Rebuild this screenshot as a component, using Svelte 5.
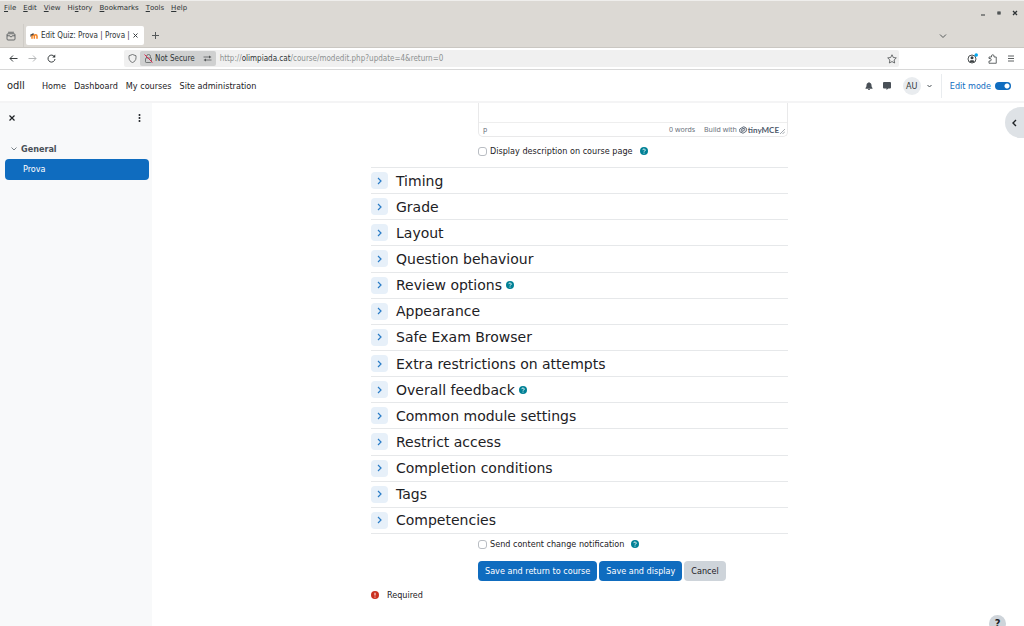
<script lang="ts">
	interface Section {
		title: string;
		help?: boolean;
	}

	const menus = ['File', 'Edit', 'View', 'History', 'Bookmarks', 'Tools', 'Help'];
	const underlined: Record<string, number> = { History: 2 };
	const links = ['Home', 'Dashboard', 'My courses', 'Site administration'];

	const sections: Section[] = [
		{ title: 'Timing' },
		{ title: 'Grade' },
		{ title: 'Layout' },
		{ title: 'Question behaviour' },
		{ title: 'Review options', help: true },
		{ title: 'Appearance' },
		{ title: 'Safe Exam Browser' },
		{ title: 'Extra restrictions on attempts' },
		{ title: 'Overall feedback', help: true },
		{ title: 'Common module settings' },
		{ title: 'Restrict access' },
		{ title: 'Completion conditions' },
		{ title: 'Tags' },
		{ title: 'Competencies' }
	];

	let showDescription = $state(false);
	let notify = $state(false);
	let editMode = $state(true);
</script>

{#snippet helpIcon(label: string)}
	<button class="help" aria-label={label}>
		<svg width="8" height="8" viewBox="0 0 16 16" aria-hidden="true">
			<circle cx="8" cy="8" r="8" fill="#008196" />
			<path d="M5.6 6.2a2.4 2.2 0 1 1 3.6 1.9C8.3 8.6 8 8.9 8 9.7" fill="none" stroke="#fff" stroke-width="1.8" />
			<circle cx="8" cy="12" r="1.1" fill="#fff" />
		</svg>
	</button>
{/snippet}

<div class="window">
	<header class="browser">
		<div class="menubar">
			<nav class="menus" aria-label="Application menu">
				{#each menus as menu}
					{@const at = underlined[menu] ?? 0}
					<button>{menu.slice(0, at)}<u>{menu[at]}</u>{menu.slice(at + 1)}</button>
				{/each}
			</nav>
			<div class="controls">
				<button aria-label="Minimize">
					<svg width="6" height="6" viewBox="0 0 6 6"><path d="M1 5h4" stroke="#2e3436" stroke-width="1" /></svg>
				</button>
				<button aria-label="Restore">
					<svg width="6" height="6" viewBox="0 0 6 6"><path d="M2 2h2v2H2z" fill="none" stroke="#2e3436" stroke-width="1.2" /></svg>
				</button>
				<button aria-label="Close window">
					<svg width="6" height="6" viewBox="0 0 6 6"><path d="M1 1l4 4M5 1L1 5" stroke="#2e3436" stroke-width="1.3" /></svg>
				</button>
			</div>
		</div>

		<div class="tabs">
			<button class="firefox-view" aria-label="Recent browsing">
				<svg width="10" height="10" viewBox="0 0 20 20" fill="none" stroke="#4a4f50" stroke-width="1.6">
					<path d="M5 2.500h10" stroke-linecap="round" />
					<path d="M4 5.500h12a2 2 0 0 1 2 2V16a2 2 0 0 1-2 2H4a2 2 0 0 1-2-2V7.500a2 2 0 0 1 2-2zM2 9.500h5.500c0 3 5 3 5 0H18" />
				</svg>
			</button>
			<div class="tab">
				<svg width="8" height="6" viewBox="0 0 24 18" fill="none">
					<path d="M6 17V9.500a3.500 3.500 0 0 1 7 0V17M13 9.500a3.500 3.500 0 0 1 8 0V17" stroke="#f58220" stroke-width="4.500" />
					<path d="M0 6l9-5 4 2-8 5z" fill="#444" />
					<path d="M2 5v7" stroke="#444" stroke-width="1.5" />
				</svg>
				<span class="tab-title">Edit Quiz: Prova | Prova |</span>
				<button aria-label="Close tab">
					<svg width="5" height="5" viewBox="0 0 5 5"><path d="M.5.5l4 4M4.500.5l-4 4" stroke="#3a3f41" /></svg>
				</button>
			</div>
			<button class="new-tab" aria-label="New tab">
				<svg width="7" height="7" viewBox="0 0 7 7"><path d="M3.500 0v7M0 3.500h7" stroke="#55595a" /></svg>
			</button>
			<button class="all-tabs" aria-label="List all tabs">
				<svg width="8" height="6" viewBox="0 0 8 6"><path d="M1 1.500l3 3 3-3" fill="none" stroke="#55595a" /></svg>
			</button>
		</div>

		<div class="toolbar">
			<div class="history">
				<button aria-label="Back">
					<svg width="9" height="9" viewBox="0 0 18 18" fill="none" stroke="#2e3436" stroke-width="1.9"><path d="M17 9H2M8 3L2 9l6 6" /></svg>
				</button>
				<button aria-label="Forward" disabled>
					<svg width="9" height="9" viewBox="0 0 18 18" fill="none" stroke="#b0b2b3" stroke-width="1.9"><path d="M1 9h15M10 3l6 6-6 6" /></svg>
				</button>
				<button aria-label="Reload">
					<svg width="9" height="9" viewBox="0 0 18 18" fill="none" stroke="#2e3436" stroke-width="1.9">
						<path d="M15 5.500A7 7 0 1 0 16 10" />
						<path d="M16.500 1v6h-6z" fill="#2e3436" stroke="none" />
					</svg>
				</button>
			</div>
			<div class="urlbar">
				<button class="shield" aria-label="Tracking protection">
					<svg width="9" height="9" viewBox="0 0 18 18" fill="none" stroke="#55595a" stroke-width="1.6"><path d="M9 1l7 2.500v4c0 5-3 8-7 9.500-4-1.500-7-4.500-7-9.500v-4z" /></svg>
				</button>
				<button class="insecure">
					<svg width="9" height="9" viewBox="0 0 18 18" fill="none" stroke="#5a5f60" stroke-width="1.6">
						<path d="M5 8V5a4 4 0 0 1 8 0v3" />
						<rect x="3" y="8" width="12" height="9" rx="1.5" />
						<path d="M1 1l16 16" stroke="#e22850" stroke-width="2" />
					</svg>
					Not Secure
				</button>
				<button class="permissions" aria-label="Site permissions">
					<svg width="9" height="7" viewBox="0 0 18 14" fill="none" stroke="#55595a" stroke-width="1.6"><path d="M1 4h11M6 10h11" /><path d="M12 1l5 3-5 3zM6 7l-5 3 5 3z" fill="#55595a" stroke="none" /></svg>
				</button>
				<span class="url">http://<b>olimpiada.cat</b>/course/modedit.php?update=4&amp;return=0</span>
				<button class="bookmark" aria-label="Bookmark this page">
					<svg width="10" height="10" viewBox="0 0 20 20" fill="none" stroke="#55595a" stroke-width="1.7" stroke-linejoin="round"><path d="M10 1.500l2.600 5.500 6 .8-4.400 4.200 1.100 6L10 15.100 4.700 18l1.100-6L1.400 7.800l6-.8z" /></svg>
				</button>
			</div>
			<div class="tools">
				<button aria-label="Account">
					<svg width="11" height="11" viewBox="0 0 22 22" fill="none" stroke="#3a3f41" stroke-width="1.8">
						<circle cx="10" cy="12" r="8" />
						<circle cx="10" cy="9.5" r="3" fill="#3a3f41" stroke="none" />
						<path d="M4.500 16.500c1-3 10-3 11 0-3 3-8 3-11 0z" fill="#3a3f41" stroke="none" />
						<circle cx="18.5" cy="4" r="3.5" fill="#00a8f0" stroke="none" />
					</svg>
				</button>
				<button aria-label="Extensions">
					<svg width="9" height="10" viewBox="0 0 18 20" fill="none" stroke="#4a4f50" stroke-width="1.7" stroke-linejoin="round"><path d="M2 8V6h5V4a2.500 2.500 0 0 1 5 0v2h4.500v12.500H2V14h2a2 2 0 0 0 0-5H2z" /></svg>
				</button>
				<button aria-label="Open application menu">
					<svg width="8" height="7" viewBox="0 0 8 7"><path d="M1 1h6M1 3.500h6M1 6h6" stroke="#4a4f50" stroke-width=".9" /></svg>
				</button>
			</div>
		</div>
	</header>

	<header class="navbar">
		<a class="brand" href="/">odll</a>
		<nav class="primary" aria-label="Site">
			{#each links as link}
				<a href="/">{link}</a>
			{/each}
		</nav>
		<div class="user">
			<button aria-label="Notifications">
				<svg width="8" height="8" viewBox="0 0 16 16" fill="#495057"><path d="M8 0a1 1 0 0 0-1 1v.6C4.500 2 3 4 3 6.500 3 10 2 11 1 12v1.500h14V12c-1-1-2-2-2-5.500C13 4 11.500 2 9 1.600V1a1 1 0 0 0-1-1zM6 14.200h4a2 2 0 0 1-4 0z" /></svg>
			</button>
			<button aria-label="Messages">
				<svg width="8" height="8" viewBox="0 0 16 16" fill="#495057"><path d="M2 0h12a2 2 0 0 1 2 2v9a2 2 0 0 1-2 2h-3.500L7 16v-3H2a2 2 0 0 1-2-2V2a2 2 0 0 1 2-2z" /></svg>
			</button>
			<button class="account">
				<span class="avatar">AU</span>
				<svg width="5" height="4" viewBox="0 0 5 4"><path d="M.5 1l2 2 2-2" fill="none" stroke="#495057" /></svg>
			</button>
		</div>
		<label class="edit-mode">
			Edit mode
			<input type="checkbox" role="switch" bind:checked={editMode} />
		</label>
	</header>

	<div class="page">
		<aside class="drawer">
			<div class="drawer-head">
				<button aria-label="Close course index">
					<svg width="6" height="6" viewBox="0 0 6 6"><path d="M.5.5l5 5M5.500.5l-5 5" stroke="#1d2125" stroke-width="1.2" /></svg>
				</button>
				<button aria-label="Course index options">
					<svg width="3" height="8" viewBox="0 0 3 8" fill="#1d2125"><circle cx="1.5" cy="1" r="1" /><circle cx="1.5" cy="4" r="1" /><circle cx="1.5" cy="7" r="1" /></svg>
				</button>
			</div>
			<div class="drawer-section">
				<button aria-label="Collapse General">
					<svg width="6" height="4" viewBox="0 0 6 4"><path d="M.5.5l2.500 2.500L5.500.5" fill="none" stroke="#6a737b" stroke-width=".9" /></svg>
				</button>
				<a href="/">General</a>
			</div>
			<a class="current" href="/">Prova</a>
		</aside>

		<main>
			<form onsubmit={(e) => e.preventDefault()}>
				<div class="field">
					<div class="editor">
						<textarea aria-label="Description"></textarea>
						<div class="statusbar">
							<span class="path">p</span>
							<span>0 words</span>
							<a href="/">
								Build with
								<svg width="8" height="8" viewBox="0 0 16 16" fill="none" stroke="#4f5b6c" stroke-width="1.8" stroke-linejoin="round">
									<path d="M5.500 3.500L9.500 1.500 14.500 4v6.500L8 14.500 1.500 11.500V6z" />
									<path d="M5.500 6l5-1.500V9l-5 2z" />
								</svg>
								<b>tinyMCE</b>
							</a>
							<svg class="grip" width="5" height="5" viewBox="0 0 5 5"><path d="M0 5l5-5M2.500 5L5 2.500" stroke="#8b929b" stroke-width=".8" /></svg>
						</div>
					</div>
					<div class="check">
						<input id="show-description" type="checkbox" bind:checked={showDescription} />
						<label for="show-description">Display description on course page</label>
						{@render helpIcon('Help with Display description on course page')}
					</div>
				</div>

				<div class="sections">
					{#each sections as section}
						<section>
							<button class="toggle" aria-label="Expand {section.title}">
								<svg width="5" height="8" viewBox="0 0 5 8"><path d="M1 1l3 3-3 3" fill="none" stroke="#2a7cc7" stroke-width="1.2" /></svg>
							</button>
							<h3>{section.title}</h3>
							{#if section.help}
								{@render helpIcon(`Help with ${section.title}`)}
							{/if}
						</section>
					{/each}
				</div>

				<div class="field">
					<div class="check notify">
						<input id="notify" type="checkbox" bind:checked={notify} />
						<label for="notify">Send content change notification</label>
						{@render helpIcon('Help with Send content change notification')}
					</div>
					<div class="actions">
						<button class="btn primary-btn" type="submit">Save and return to course</button>
						<button class="btn primary-btn" type="submit">Save and display</button>
						<button class="btn" type="button">Cancel</button>
					</div>
				</div>

				<div class="required">
					<svg width="8" height="8" viewBox="0 0 16 16" aria-hidden="true">
						<circle cx="8" cy="8" r="8" fill="#ca3120" />
						<path d="M8 3.500v5.500" stroke="#fff" stroke-width="2" />
						<circle cx="8" cy="12" r="1.2" fill="#fff" />
					</svg>
					Required
				</div>
			</form>
		</main>

		<button class="open-blocks" aria-label="Open block drawer">
			<svg width="5" height="8" viewBox="0 0 5 8"><path d="M4 1L1 4l3 3" fill="none" stroke="#1d2125" stroke-width="1.4" /></svg>
		</button>
		<button class="footer-help" aria-label="Show footer">?</button>
	</div>
</div>

<style>
	:global(body) {
		margin: 0;
		overflow: hidden;
	}

	.window {
		display: flex;
		flex-direction: column;
		height: 100vh;
		background: #fff;
		color: #1d2125;
		font: 9px/12px 'DejaVu Sans Condensed', 'DejaVu Sans', sans-serif;
	}

	button {
		display: flex;
		align-items: center;
		justify-content: center;
		padding: 0;
		border: 0;
		background: none;
		color: inherit;
		font: inherit;
	}

	svg {
		display: block;
		flex-shrink: 0;
	}

	a {
		color: inherit;
		text-decoration: none;
	}

	/* Browser chrome */
	.browser {
		background: #dcd9d4;
		border-top: 1px solid #efeeec;
		color: #2e3436;
		font-size: 8px;
	}

	.menubar {
		display: flex;
		justify-content: space-between;
		height: 23px;
		padding: 0 6px 0 4px;
	}

	.menus {
		display: flex;
		gap: 7px;
		height: 13px;
		font-family: 'DejaVu Sans', sans-serif;
		font-size: 7px;
	}

	.controls {
		display: flex;
		align-items: center;
		gap: 10px;
	}

	.tabs {
		display: flex;
		align-items: center;
		height: 23px;
		padding-left: 6px;
		border-bottom: 1px solid #cac7c2;
	}

	.firefox-view {
		height: 23px;
		padding-right: 7px;
		border-right: 1px solid #cfccc7;
	}

	.tab {
		display: flex;
		align-items: center;
		gap: 3px;
		box-sizing: border-box;
		width: 118px;
		height: 19px;
		margin-left: 2px;
		padding: 0 6px 0 4px;
		border-radius: 2px;
		background: #fff;
	}

	.tab-title {
		flex: 1;
		overflow: hidden;
		white-space: nowrap;
	}

	.new-tab {
		margin-left: 8px;
	}

	.all-tabs {
		margin: 0 77px 0 auto;
	}

	.toolbar {
		display: flex;
		align-items: center;
		height: 21px;
		padding: 0 9px;
		border-bottom: 1px solid #d8d8d8;
		background: #fff;
	}

	.history {
		display: flex;
		gap: 10px;
		width: 115px;
	}

	.urlbar {
		display: flex;
		align-items: center;
		flex: 1;
		height: 17px;
		margin-right: 68px;
		border-radius: 2px;
		background: #f0f0f0;
	}

	.shield {
		width: 16px;
	}

	.insecure {
		gap: 2px;
		height: 15px;
		padding: 0 4px;
		border-radius: 2px 0 0 2px;
		background: #cfd0d0;
	}

	.permissions {
		width: 17px;
		height: 15px;
		border-radius: 0 2px 2px 0;
		background: #cfd0d0;
	}

	.url {
		flex: 1;
		padding-left: 4px;
		color: #8d9091;
	}

	.url b {
		color: #2e3436;
		font-weight: 400;
	}

	.bookmark {
		width: 15px;
	}

	.tools {
		display: flex;
		align-items: center;
		gap: 10px;
	}

	/* Site navbar */
	.navbar {
		display: flex;
		align-items: center;
		height: 31px;
		padding: 0 13px 0 7px;
		border-bottom: 2px solid #f4f4f5;
	}

	.brand {
		width: 35px;
		font-size: 11px;
	}

	.primary {
		display: flex;
		flex: 1;
		gap: 8px;
	}

	.user,
	.account {
		display: flex;
		align-items: center;
		gap: 10px;
	}

	.account {
		gap: 6px;
		margin-left: 2px;
	}

	.avatar {
		width: 18px;
		height: 18px;
		border-radius: 50%;
		background: #e9ecef;
		color: #343a40;
		line-height: 18px;
		text-align: center;
	}

	.edit-mode {
		display: flex;
		align-items: center;
		gap: 4px;
		height: 24px;
		margin-left: 9px;
		padding-left: 8px;
		border-left: 1px solid #e9ecef;
		color: #0f6cbf;
	}

	.edit-mode input {
		appearance: none;
		width: 16px;
		height: 8px;
		margin: 0;
		border-radius: 4px;
		background: radial-gradient(circle at 12px 4px, #fff 2px, transparent 3px) #0f6cbf;
	}

	.edit-mode input:not(:checked) {
		background: #8f959e;
	}

	/* Course page */
	.page {
		position: relative;
		display: flex;
		flex: 1;
		min-height: 0;
		overflow: hidden;
	}

	.drawer {
		box-sizing: border-box;
		width: 152px;
		padding: 0 3px 0 5px;
		background: #f8f9fa;
	}

	.drawer-head {
		display: flex;
		align-items: center;
		justify-content: space-between;
		height: 30px;
		padding: 0 8px 0 4px;
	}

	.drawer-section {
		display: flex;
		align-items: center;
		gap: 4px;
		height: 20px;
		margin-top: 6px;
		padding-left: 6px;
		color: #495057;
		font-weight: 700;
	}

	.current {
		display: block;
		padding-left: 18px;
		border-radius: 4px;
		background: #0f6cbf;
		color: #fff;
		line-height: 21px;
	}

	main {
		flex: 1;
		padding: 0 17px 0 0;
	}

	form {
		max-width: 417px;
		margin: 0 auto;
	}

	.field {
		margin-left: 107px;
	}

	.editor {
		border: 1px solid #e9e9ea;
		border-top: 0;
		border-radius: 0 0 5px 5px;
	}

	.editor textarea {
		display: block;
		box-sizing: border-box;
		width: 100%;
		height: 19px;
		border: 0;
		background: transparent;
		resize: none;
	}

	.statusbar {
		display: flex;
		align-items: center;
		height: 13px;
		gap: 9px;
		padding: 0 2px 0 4px;
		border-top: 1px solid #eee;
		color: #6b727d;
		font-family: 'Noto Sans', sans-serif;
		font-size: 7px;
	}

	.statusbar .path {
		flex: 1;
	}

	.statusbar a {
		display: flex;
		align-items: center;
		gap: 2px;
	}

	.statusbar b {
		margin-left: -1px;
		color: #4f5b6c;
		font-family: Lato, sans-serif;
		font-size: 8px;
		font-weight: 700;
	}

	.grip {
		align-self: flex-end;
		margin: 0 0 2px -8px;
	}

	.check {
		display: flex;
		align-items: center;
		height: 28px;
	}

	.check input {
		appearance: none;
		box-sizing: border-box;
		width: 9px;
		height: 9px;
		margin: 0 3px 0 0;
		border: 1px solid #b9bdc3;
		border-radius: 3px;
		background: #fff;
	}

	.check input:checked {
		background: #0f6cbf;
	}

	.check .help {
		margin-left: 7px;
	}

	.sections {
		display: grid;
		grid-auto-rows: 1fr;
		min-height: 366px;
		margin-top: 2px;
		border-top: 1px solid #e6e8ea;
	}

	section {
		display: flex;
		align-items: center;
		border-bottom: 1px solid #e6e8ea;
	}

	.toggle {
		width: 17px;
		height: 17px;
		border-radius: 4px;
		background: #e7f0f9;
	}

	h3 {
		margin: 0 4px 0 8px;
		font-family: 'DejaVu Sans', sans-serif;
		font-size: 14px;
		font-weight: 400;
		line-height: 20px;
	}

	.check.notify {
		height: 20px;
	}

	.actions {
		display: flex;
		gap: 2px;
		margin-top: 7px;
	}

	.btn {
		height: 20px;
		padding: 0 7px;
		border-radius: 4px;
		background: #ced4da;
		white-space: nowrap;
	}

	.primary-btn {
		background: #0f6cbf;
		color: #fff;
	}

	.required {
		display: flex;
		align-items: center;
		gap: 8px;
		margin-top: 8px;
	}

	/* Floating buttons over the page */
	.open-blocks {
		position: absolute;
		top: 4px;
		right: 0;
		width: 19px;
		height: 31px;
		border-radius: 16px 0 0 16px;
		background: #dee2e6;
	}

	.footer-help {
		position: absolute;
		right: 18px;
		bottom: -6px;
		width: 17px;
		height: 17px;
		border-radius: 50%;
		background: #ced4da;
		font-size: 11px;
		font-weight: 700;
	}
</style>
